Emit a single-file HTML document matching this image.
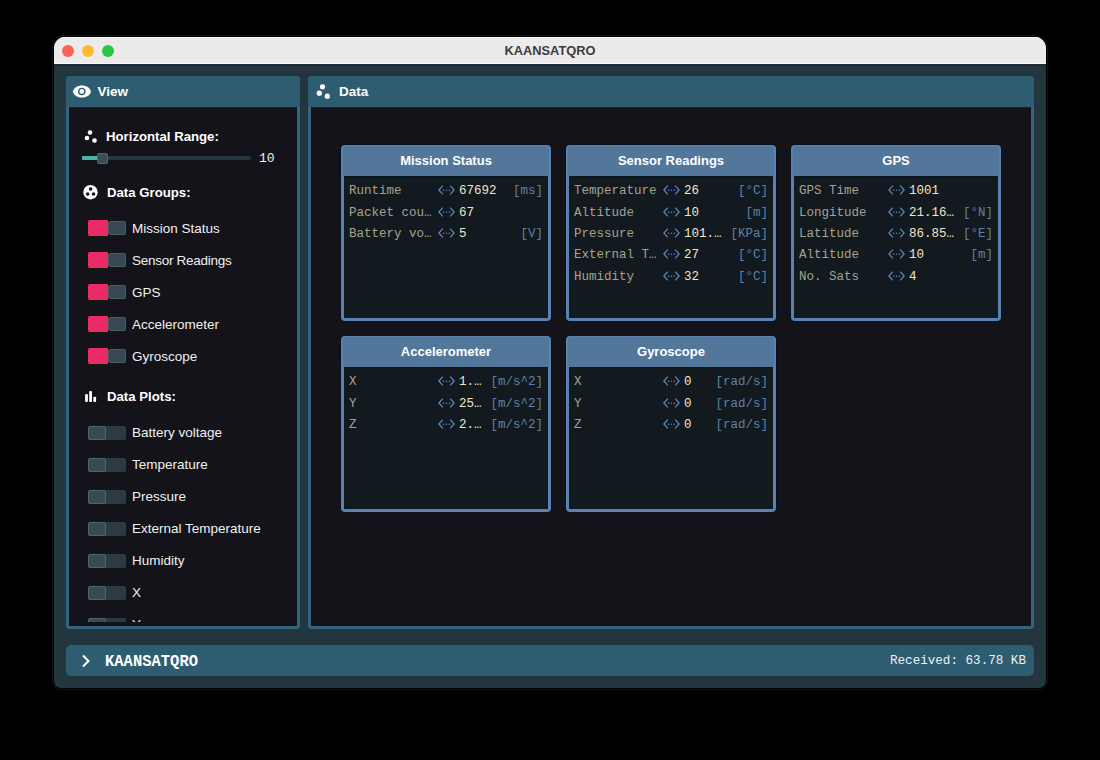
<!DOCTYPE html>
<html><head><meta charset="utf-8">
<style>
html,body{margin:0;padding:0;background:#000;width:1100px;height:760px;overflow:hidden;}
*{box-sizing:border-box;}
.a{position:absolute;}
body{font-family:"Liberation Sans",sans-serif;position:relative;}
.mono{font-family:"Liberation Mono",monospace;}
#win{left:54px;top:37px;width:992px;height:651px;border-radius:11px 11px 7px 7px;background:#23353e;overflow:hidden;box-shadow:0 0 0 1px #000,0 0 0 2px #121212;}
#tb{left:0;top:0;width:992px;height:27px;background:#ecEAEB;border-bottom:1px solid #fafafa;border-top:1px solid #f7f6f7;}
#tbl{left:0;top:27px;width:992px;height:2px;background:linear-gradient(#28333d,#17212a);}
.dot{width:12px;height:12px;border-radius:50%;top:7.5px;}
#title{left:0;top:0;width:992px;text-align:center;font-weight:bold;font-size:12.8px;line-height:27px;color:#3c3c3c;}
.panel{background:#2e5d71;border-radius:4px;}
.inner{background:#141319;border-top:1px solid #0b2733;}
.pframe{background:#31667e;border-radius:4px;}
.phdr{background:#2e5d71;border-radius:4px 4px 0 0;}
.ph{color:#fff;font-weight:bold;font-size:13.5px;line-height:16px;white-space:nowrap;}
.lbl{color:#fff;font-weight:bold;font-size:13.2px;line-height:16px;white-space:nowrap;}
.it{color:#f0f0f0;font-size:13.5px;line-height:16px;white-space:nowrap;}
.card{width:210px;height:176px;background:#5a82ae;border-radius:4px;box-shadow:0 0 0 1px rgba(5,15,35,0.6);}
.chd{left:2px;top:1px;width:206px;height:30px;background:#53769b;border-radius:3px 3px 0 0;}
.ci{left:3px;top:31px;width:204px;height:142px;background:#121a20;border-top:1px solid #08141e;}
.ct{left:0;top:0;width:210px;text-align:center;color:#fff;font-weight:bold;font-size:13px;line-height:31px;}
.row{font-family:"Liberation Mono",monospace;font-size:12.5px;line-height:16px;white-space:pre;}
.l{color:#a6a28c;}
.v{color:#efe6c8;}
.u{color:#5f80a8;}
</style></head><body>
<div id="win" class="a">
  <div id="tb" class="a"></div>
  <div id="tbl" class="a"></div>
  <div class="a dot" style="left:8px;background:#fe5f57;"></div>
  <div class="a dot" style="left:28px;background:#febc2e;"></div>
  <div class="a dot" style="left:47.5px;background:#28c840;"></div>
  <div id="title" class="a">KAANSATQRO</div>
</div>
<div class="a pframe" style="left:66px;top:76px;width:234px;height:553px;"></div><div class="a phdr" style="left:66px;top:76px;width:234px;height:31px;"></div>
<div class="a inner" style="left:69px;top:107px;width:228px;height:519px;"></div>
<div class="a pframe" style="left:308px;top:76px;width:726px;height:553px;"></div><div class="a phdr" style="left:308px;top:76px;width:726px;height:31px;"></div>
<div class="a inner" style="left:311px;top:107px;width:720px;height:519px;"></div>
<div class="a panel" style="left:66px;top:645px;width:968px;height:31px;border-radius:5px;"></div>


<svg class="a" style="left:72px;top:84px" width="20" height="16" viewBox="0 0 20 16">
  <path d="M0.9 7.5 C2.8 -0.6 17.1 -0.6 19 7.5 C17.1 15.6 2.8 15.6 0.9 7.5 Z" fill="#fff"/>
  <circle cx="9.8" cy="7.5" r="3.8" fill="#2e5d71"/>
  <circle cx="9.8" cy="7.5" r="2.4" fill="#fff"/>
</svg>
<div class="a ph" style="left:97.5px;top:84px;">View</div>
<svg class="a" style="left:314px;top:82px" width="16" height="18" viewBox="0 0 16 18">
  <circle cx="8.5" cy="4.8" r="2.6" fill="#fff"/>
  <circle cx="5.3" cy="11.2" r="2.6" fill="#fff"/>
  <circle cx="13.3" cy="14.2" r="2.6" fill="#fff"/>
</svg>
<div class="a ph" style="left:339px;top:84px;">Data</div>

<div class="a" style="left:0;top:0;width:1100px;height:622px;overflow:hidden;">

<svg class="a" style="left:82px;top:128px" width="16" height="16" viewBox="0 0 16 16">
  <circle cx="8" cy="4.5" r="2.3" fill="#fff"/>
  <circle cx="5" cy="10" r="2.3" fill="#fff"/>
  <circle cx="12.5" cy="12.5" r="2.3" fill="#fff"/>
</svg>
<div class="a lbl" style="left:106px;top:129px;">Horizontal Range:</div>
<div class="a" style="left:82px;top:156px;width:169px;height:4px;border-radius:2px;background:#26373f;"></div>
<div class="a" style="left:82px;top:156px;width:16px;height:4px;border-radius:1px;background:#4cb2ae;"></div>
<div class="a" style="left:97px;top:153px;width:11px;height:11px;border-radius:2px;background:#3a4c55;border:1px solid #55676f;"></div>
<div class="a mono" style="left:259px;top:151px;color:#f0f0f0;font-size:13px;line-height:16px;">10</div>
<svg class="a" style="left:82px;top:184px" width="16" height="16" viewBox="0 0 16 16">
  <circle cx="8.5" cy="8.2" r="7.2" fill="#fff"/>
  <circle cx="8.6" cy="5" r="1.8" fill="#141319"/>
  <circle cx="5.7" cy="10" r="1.8" fill="#141319"/>
  <circle cx="11.5" cy="10" r="1.8" fill="#141319"/>
</svg>
<div class="a lbl" style="left:107px;top:185px;">Data Groups:</div>

<div class="a" style="left:88px;top:220px;width:20px;height:16px;border-radius:2px 0 0 2px;background:#e92c66;"></div>
<div class="a" style="left:108px;top:221px;width:18px;height:14px;border-radius:2px;background:#384852;border:1px solid #4b5a64;"></div>
<div class="a it" style="left:132px;top:221px;">Mission Status</div>
<div class="a" style="left:88px;top:252px;width:20px;height:16px;border-radius:2px 0 0 2px;background:#e92c66;"></div>
<div class="a" style="left:108px;top:253px;width:18px;height:14px;border-radius:2px;background:#384852;border:1px solid #4b5a64;"></div>
<div class="a it" style="left:132px;top:253px;letter-spacing:-0.28px;">Sensor Readings</div>
<div class="a" style="left:88px;top:284px;width:20px;height:16px;border-radius:2px 0 0 2px;background:#e92c66;"></div>
<div class="a" style="left:108px;top:285px;width:18px;height:14px;border-radius:2px;background:#384852;border:1px solid #4b5a64;"></div>
<div class="a it" style="left:132px;top:285px;">GPS</div>
<div class="a" style="left:88px;top:316px;width:20px;height:16px;border-radius:2px 0 0 2px;background:#e92c66;"></div>
<div class="a" style="left:108px;top:317px;width:18px;height:14px;border-radius:2px;background:#384852;border:1px solid #4b5a64;"></div>
<div class="a it" style="left:132px;top:317px;">Accelerometer</div>
<div class="a" style="left:88px;top:348px;width:20px;height:16px;border-radius:2px 0 0 2px;background:#e92c66;"></div>
<div class="a" style="left:108px;top:349px;width:18px;height:14px;border-radius:2px;background:#384852;border:1px solid #4b5a64;"></div>
<div class="a it" style="left:132px;top:349px;">Gyroscope</div>

<svg class="a" style="left:83px;top:389px" width="16" height="16" viewBox="0 0 16 16">
  <rect x="2.1" y="4.9" width="2.8" height="8.1" rx="1" fill="#fff"/>
  <rect x="6.2" y="1.9" width="2.8" height="11.1" rx="1" fill="#fff"/>
  <rect x="10.3" y="7.7" width="2.8" height="5.3" rx="1" fill="#fff"/>
</svg>
<div class="a lbl" style="left:107px;top:389px;">Data Plots:</div>

<div class="a" style="left:88px;top:426px;width:38px;height:14px;border-radius:2px;background:#2c3a42;"></div>
<div class="a" style="left:88px;top:426px;width:18px;height:14px;border-radius:2px;background:#384a54;border:1px solid #51656e;"></div>
<div class="a it" style="left:132px;top:425px;">Battery voltage</div>
<div class="a" style="left:88px;top:458px;width:38px;height:14px;border-radius:2px;background:#2c3a42;"></div>
<div class="a" style="left:88px;top:458px;width:18px;height:14px;border-radius:2px;background:#384a54;border:1px solid #51656e;"></div>
<div class="a it" style="left:132px;top:457px;">Temperature</div>
<div class="a" style="left:88px;top:490px;width:38px;height:14px;border-radius:2px;background:#2c3a42;"></div>
<div class="a" style="left:88px;top:490px;width:18px;height:14px;border-radius:2px;background:#384a54;border:1px solid #51656e;"></div>
<div class="a it" style="left:132px;top:489px;">Pressure</div>
<div class="a" style="left:88px;top:522px;width:38px;height:14px;border-radius:2px;background:#2c3a42;"></div>
<div class="a" style="left:88px;top:522px;width:18px;height:14px;border-radius:2px;background:#384a54;border:1px solid #51656e;"></div>
<div class="a it" style="left:132px;top:521px;">External Temperature</div>
<div class="a" style="left:88px;top:554px;width:38px;height:14px;border-radius:2px;background:#2c3a42;"></div>
<div class="a" style="left:88px;top:554px;width:18px;height:14px;border-radius:2px;background:#384a54;border:1px solid #51656e;"></div>
<div class="a it" style="left:132px;top:553px;">Humidity</div>
<div class="a" style="left:88px;top:586px;width:38px;height:14px;border-radius:2px;background:#2c3a42;"></div>
<div class="a" style="left:88px;top:586px;width:18px;height:14px;border-radius:2px;background:#384a54;border:1px solid #51656e;"></div>
<div class="a it" style="left:132px;top:585px;">X</div>
<div class="a" style="left:88px;top:618px;width:38px;height:14px;border-radius:2px;background:#2c3a42;"></div>
<div class="a" style="left:88px;top:618px;width:18px;height:14px;border-radius:2px;background:#384a54;border:1px solid #51656e;"></div>
<div class="a it" style="left:132px;top:617px;">Y</div>
</div>
<div class="a card" style="left:341px;top:145px;"><div class="a chd"></div><div class="a ci"></div><div class="a ct">Mission Status</div></div>
<div class="a row l" style="left:349px;top:183px;">Runtime</div>
<svg class="a" style="left:438px;top:185px" width="17" height="10" viewBox="0 0 17 10">
<path d="M4.8 0.7 L0.9 5 L4.8 9.3 M12.2 0.7 L16.1 5 L12.2 9.3" stroke="#5a88bb" stroke-width="1.25" fill="none"/>
<circle cx="5.6" cy="5.2" r="0.75" fill="#5a88bb"/><circle cx="8.5" cy="5.2" r="0.75" fill="#5a88bb"/><circle cx="11.4" cy="5.2" r="0.75" fill="#5a88bb"/>
</svg>
<div class="a row v" style="left:459px;top:183px;">67692</div>
<div class="a row u" style="left:341px;top:183px;width:202px;text-align:right;">[ms]</div>
<div class="a row l" style="left:349px;top:205px;">Packet cou…</div>
<svg class="a" style="left:438px;top:207px" width="17" height="10" viewBox="0 0 17 10">
<path d="M4.8 0.7 L0.9 5 L4.8 9.3 M12.2 0.7 L16.1 5 L12.2 9.3" stroke="#5a88bb" stroke-width="1.25" fill="none"/>
<circle cx="5.6" cy="5.2" r="0.75" fill="#5a88bb"/><circle cx="8.5" cy="5.2" r="0.75" fill="#5a88bb"/><circle cx="11.4" cy="5.2" r="0.75" fill="#5a88bb"/>
</svg>
<div class="a row v" style="left:459px;top:205px;">67</div>
<div class="a row l" style="left:349px;top:226px;">Battery vo…</div>
<svg class="a" style="left:438px;top:228px" width="17" height="10" viewBox="0 0 17 10">
<path d="M4.8 0.7 L0.9 5 L4.8 9.3 M12.2 0.7 L16.1 5 L12.2 9.3" stroke="#5a88bb" stroke-width="1.25" fill="none"/>
<circle cx="5.6" cy="5.2" r="0.75" fill="#5a88bb"/><circle cx="8.5" cy="5.2" r="0.75" fill="#5a88bb"/><circle cx="11.4" cy="5.2" r="0.75" fill="#5a88bb"/>
</svg>
<div class="a row v" style="left:459px;top:226px;">5</div>
<div class="a row u" style="left:341px;top:226px;width:202px;text-align:right;">[V]</div>
<div class="a card" style="left:566px;top:145px;"><div class="a chd"></div><div class="a ci"></div><div class="a ct">Sensor Readings</div></div>
<div class="a row l" style="left:574px;top:183px;">Temperature</div>
<svg class="a" style="left:663px;top:185px" width="17" height="10" viewBox="0 0 17 10">
<path d="M4.8 0.7 L0.9 5 L4.8 9.3 M12.2 0.7 L16.1 5 L12.2 9.3" stroke="#5a88bb" stroke-width="1.25" fill="none"/>
<circle cx="5.6" cy="5.2" r="0.75" fill="#5a88bb"/><circle cx="8.5" cy="5.2" r="0.75" fill="#5a88bb"/><circle cx="11.4" cy="5.2" r="0.75" fill="#5a88bb"/>
</svg>
<div class="a row v" style="left:684px;top:183px;">26</div>
<div class="a row u" style="left:566px;top:183px;width:202px;text-align:right;">[°C]</div>
<div class="a row l" style="left:574px;top:205px;">Altitude</div>
<svg class="a" style="left:663px;top:207px" width="17" height="10" viewBox="0 0 17 10">
<path d="M4.8 0.7 L0.9 5 L4.8 9.3 M12.2 0.7 L16.1 5 L12.2 9.3" stroke="#5a88bb" stroke-width="1.25" fill="none"/>
<circle cx="5.6" cy="5.2" r="0.75" fill="#5a88bb"/><circle cx="8.5" cy="5.2" r="0.75" fill="#5a88bb"/><circle cx="11.4" cy="5.2" r="0.75" fill="#5a88bb"/>
</svg>
<div class="a row v" style="left:684px;top:205px;">10</div>
<div class="a row u" style="left:566px;top:205px;width:202px;text-align:right;">[m]</div>
<div class="a row l" style="left:574px;top:226px;">Pressure</div>
<svg class="a" style="left:663px;top:228px" width="17" height="10" viewBox="0 0 17 10">
<path d="M4.8 0.7 L0.9 5 L4.8 9.3 M12.2 0.7 L16.1 5 L12.2 9.3" stroke="#5a88bb" stroke-width="1.25" fill="none"/>
<circle cx="5.6" cy="5.2" r="0.75" fill="#5a88bb"/><circle cx="8.5" cy="5.2" r="0.75" fill="#5a88bb"/><circle cx="11.4" cy="5.2" r="0.75" fill="#5a88bb"/>
</svg>
<div class="a row v" style="left:684px;top:226px;">101.…</div>
<div class="a row u" style="left:566px;top:226px;width:202px;text-align:right;">[KPa]</div>
<div class="a row l" style="left:574px;top:247px;">External T…</div>
<svg class="a" style="left:663px;top:249px" width="17" height="10" viewBox="0 0 17 10">
<path d="M4.8 0.7 L0.9 5 L4.8 9.3 M12.2 0.7 L16.1 5 L12.2 9.3" stroke="#5a88bb" stroke-width="1.25" fill="none"/>
<circle cx="5.6" cy="5.2" r="0.75" fill="#5a88bb"/><circle cx="8.5" cy="5.2" r="0.75" fill="#5a88bb"/><circle cx="11.4" cy="5.2" r="0.75" fill="#5a88bb"/>
</svg>
<div class="a row v" style="left:684px;top:247px;">27</div>
<div class="a row u" style="left:566px;top:247px;width:202px;text-align:right;">[°C]</div>
<div class="a row l" style="left:574px;top:269px;">Humidity</div>
<svg class="a" style="left:663px;top:271px" width="17" height="10" viewBox="0 0 17 10">
<path d="M4.8 0.7 L0.9 5 L4.8 9.3 M12.2 0.7 L16.1 5 L12.2 9.3" stroke="#5a88bb" stroke-width="1.25" fill="none"/>
<circle cx="5.6" cy="5.2" r="0.75" fill="#5a88bb"/><circle cx="8.5" cy="5.2" r="0.75" fill="#5a88bb"/><circle cx="11.4" cy="5.2" r="0.75" fill="#5a88bb"/>
</svg>
<div class="a row v" style="left:684px;top:269px;">32</div>
<div class="a row u" style="left:566px;top:269px;width:202px;text-align:right;">[°C]</div>
<div class="a card" style="left:791px;top:145px;"><div class="a chd"></div><div class="a ci"></div><div class="a ct">GPS</div></div>
<div class="a row l" style="left:799px;top:183px;">GPS Time</div>
<svg class="a" style="left:888px;top:185px" width="17" height="10" viewBox="0 0 17 10">
<path d="M4.8 0.7 L0.9 5 L4.8 9.3 M12.2 0.7 L16.1 5 L12.2 9.3" stroke="#5a88bb" stroke-width="1.25" fill="none"/>
<circle cx="5.6" cy="5.2" r="0.75" fill="#5a88bb"/><circle cx="8.5" cy="5.2" r="0.75" fill="#5a88bb"/><circle cx="11.4" cy="5.2" r="0.75" fill="#5a88bb"/>
</svg>
<div class="a row v" style="left:909px;top:183px;">1001</div>
<div class="a row l" style="left:799px;top:205px;">Longitude</div>
<svg class="a" style="left:888px;top:207px" width="17" height="10" viewBox="0 0 17 10">
<path d="M4.8 0.7 L0.9 5 L4.8 9.3 M12.2 0.7 L16.1 5 L12.2 9.3" stroke="#5a88bb" stroke-width="1.25" fill="none"/>
<circle cx="5.6" cy="5.2" r="0.75" fill="#5a88bb"/><circle cx="8.5" cy="5.2" r="0.75" fill="#5a88bb"/><circle cx="11.4" cy="5.2" r="0.75" fill="#5a88bb"/>
</svg>
<div class="a row v" style="left:909px;top:205px;">21.16…</div>
<div class="a row u" style="left:791px;top:205px;width:202px;text-align:right;">[°N]</div>
<div class="a row l" style="left:799px;top:226px;">Latitude</div>
<svg class="a" style="left:888px;top:228px" width="17" height="10" viewBox="0 0 17 10">
<path d="M4.8 0.7 L0.9 5 L4.8 9.3 M12.2 0.7 L16.1 5 L12.2 9.3" stroke="#5a88bb" stroke-width="1.25" fill="none"/>
<circle cx="5.6" cy="5.2" r="0.75" fill="#5a88bb"/><circle cx="8.5" cy="5.2" r="0.75" fill="#5a88bb"/><circle cx="11.4" cy="5.2" r="0.75" fill="#5a88bb"/>
</svg>
<div class="a row v" style="left:909px;top:226px;">86.85…</div>
<div class="a row u" style="left:791px;top:226px;width:202px;text-align:right;">[°E]</div>
<div class="a row l" style="left:799px;top:247px;">Altitude</div>
<svg class="a" style="left:888px;top:249px" width="17" height="10" viewBox="0 0 17 10">
<path d="M4.8 0.7 L0.9 5 L4.8 9.3 M12.2 0.7 L16.1 5 L12.2 9.3" stroke="#5a88bb" stroke-width="1.25" fill="none"/>
<circle cx="5.6" cy="5.2" r="0.75" fill="#5a88bb"/><circle cx="8.5" cy="5.2" r="0.75" fill="#5a88bb"/><circle cx="11.4" cy="5.2" r="0.75" fill="#5a88bb"/>
</svg>
<div class="a row v" style="left:909px;top:247px;">10</div>
<div class="a row u" style="left:791px;top:247px;width:202px;text-align:right;">[m]</div>
<div class="a row l" style="left:799px;top:269px;">No. Sats</div>
<svg class="a" style="left:888px;top:271px" width="17" height="10" viewBox="0 0 17 10">
<path d="M4.8 0.7 L0.9 5 L4.8 9.3 M12.2 0.7 L16.1 5 L12.2 9.3" stroke="#5a88bb" stroke-width="1.25" fill="none"/>
<circle cx="5.6" cy="5.2" r="0.75" fill="#5a88bb"/><circle cx="8.5" cy="5.2" r="0.75" fill="#5a88bb"/><circle cx="11.4" cy="5.2" r="0.75" fill="#5a88bb"/>
</svg>
<div class="a row v" style="left:909px;top:269px;">4</div>
<div class="a card" style="left:341px;top:336px;"><div class="a chd"></div><div class="a ci"></div><div class="a ct">Accelerometer</div></div>
<div class="a row l" style="left:349px;top:374px;">X</div>
<svg class="a" style="left:438px;top:376px" width="17" height="10" viewBox="0 0 17 10">
<path d="M4.8 0.7 L0.9 5 L4.8 9.3 M12.2 0.7 L16.1 5 L12.2 9.3" stroke="#5a88bb" stroke-width="1.25" fill="none"/>
<circle cx="5.6" cy="5.2" r="0.75" fill="#5a88bb"/><circle cx="8.5" cy="5.2" r="0.75" fill="#5a88bb"/><circle cx="11.4" cy="5.2" r="0.75" fill="#5a88bb"/>
</svg>
<div class="a row v" style="left:459px;top:374px;">1.…</div>
<div class="a row u" style="left:341px;top:374px;width:202px;text-align:right;">[m/s^2]</div>
<div class="a row l" style="left:349px;top:396px;">Y</div>
<svg class="a" style="left:438px;top:398px" width="17" height="10" viewBox="0 0 17 10">
<path d="M4.8 0.7 L0.9 5 L4.8 9.3 M12.2 0.7 L16.1 5 L12.2 9.3" stroke="#5a88bb" stroke-width="1.25" fill="none"/>
<circle cx="5.6" cy="5.2" r="0.75" fill="#5a88bb"/><circle cx="8.5" cy="5.2" r="0.75" fill="#5a88bb"/><circle cx="11.4" cy="5.2" r="0.75" fill="#5a88bb"/>
</svg>
<div class="a row v" style="left:459px;top:396px;">25…</div>
<div class="a row u" style="left:341px;top:396px;width:202px;text-align:right;">[m/s^2]</div>
<div class="a row l" style="left:349px;top:417px;">Z</div>
<svg class="a" style="left:438px;top:419px" width="17" height="10" viewBox="0 0 17 10">
<path d="M4.8 0.7 L0.9 5 L4.8 9.3 M12.2 0.7 L16.1 5 L12.2 9.3" stroke="#5a88bb" stroke-width="1.25" fill="none"/>
<circle cx="5.6" cy="5.2" r="0.75" fill="#5a88bb"/><circle cx="8.5" cy="5.2" r="0.75" fill="#5a88bb"/><circle cx="11.4" cy="5.2" r="0.75" fill="#5a88bb"/>
</svg>
<div class="a row v" style="left:459px;top:417px;">2.…</div>
<div class="a row u" style="left:341px;top:417px;width:202px;text-align:right;">[m/s^2]</div>
<div class="a card" style="left:566px;top:336px;"><div class="a chd"></div><div class="a ci"></div><div class="a ct">Gyroscope</div></div>
<div class="a row l" style="left:574px;top:374px;">X</div>
<svg class="a" style="left:663px;top:376px" width="17" height="10" viewBox="0 0 17 10">
<path d="M4.8 0.7 L0.9 5 L4.8 9.3 M12.2 0.7 L16.1 5 L12.2 9.3" stroke="#5a88bb" stroke-width="1.25" fill="none"/>
<circle cx="5.6" cy="5.2" r="0.75" fill="#5a88bb"/><circle cx="8.5" cy="5.2" r="0.75" fill="#5a88bb"/><circle cx="11.4" cy="5.2" r="0.75" fill="#5a88bb"/>
</svg>
<div class="a row v" style="left:684px;top:374px;">0</div>
<div class="a row u" style="left:566px;top:374px;width:202px;text-align:right;">[rad/s]</div>
<div class="a row l" style="left:574px;top:396px;">Y</div>
<svg class="a" style="left:663px;top:398px" width="17" height="10" viewBox="0 0 17 10">
<path d="M4.8 0.7 L0.9 5 L4.8 9.3 M12.2 0.7 L16.1 5 L12.2 9.3" stroke="#5a88bb" stroke-width="1.25" fill="none"/>
<circle cx="5.6" cy="5.2" r="0.75" fill="#5a88bb"/><circle cx="8.5" cy="5.2" r="0.75" fill="#5a88bb"/><circle cx="11.4" cy="5.2" r="0.75" fill="#5a88bb"/>
</svg>
<div class="a row v" style="left:684px;top:396px;">0</div>
<div class="a row u" style="left:566px;top:396px;width:202px;text-align:right;">[rad/s]</div>
<div class="a row l" style="left:574px;top:417px;">Z</div>
<svg class="a" style="left:663px;top:419px" width="17" height="10" viewBox="0 0 17 10">
<path d="M4.8 0.7 L0.9 5 L4.8 9.3 M12.2 0.7 L16.1 5 L12.2 9.3" stroke="#5a88bb" stroke-width="1.25" fill="none"/>
<circle cx="5.6" cy="5.2" r="0.75" fill="#5a88bb"/><circle cx="8.5" cy="5.2" r="0.75" fill="#5a88bb"/><circle cx="11.4" cy="5.2" r="0.75" fill="#5a88bb"/>
</svg>
<div class="a row v" style="left:684px;top:417px;">0</div>
<div class="a row u" style="left:566px;top:417px;width:202px;text-align:right;">[rad/s]</div>

<svg class="a" style="left:80px;top:653px" width="12" height="16" viewBox="0 0 12 16">
<path d="M3 2.5 L8.5 8 L3 13.5" stroke="#fff" stroke-width="2" fill="none"/>
</svg>
<div class="a mono" style="left:105px;top:653px;color:#fff;font-weight:bold;font-size:15.5px;line-height:18px;transform:scaleY(1.1);transform-origin:0 14px;">KAANSATQRO</div>
<div class="a mono" style="left:0;top:653px;width:1026px;text-align:right;color:#f0f0f0;font-size:12.6px;line-height:16px;">Received: 63.78 KB</div>

</body></html>
